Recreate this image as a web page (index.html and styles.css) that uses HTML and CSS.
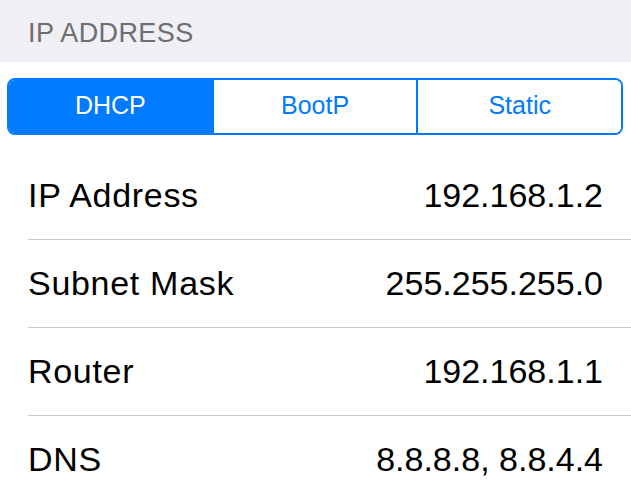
FILE: index.html
```html
<!DOCTYPE html>
<html lang="en">
<head>
    <meta charset="UTF-8">
    <meta name="viewport" content="width=device-width, initial-scale=1.0">
    <title>IP Address</title>
    <link rel="stylesheet" href="styles.css">
</head>
<body>
    <header class="section-header">IP ADDRESS</header>

    <div class="segmented">
        <button class="segment active">DHCP</button>
        <button class="segment">BootP</button>
        <button class="segment">Static</button>
    </div>

    <ul class="table">
        <li class="row"><span class="label">IP Address</span><span class="value">192.168.1.2</span></li>
        <li class="row"><span class="label">Subnet Mask</span><span class="value">255.255.255.0</span></li>
        <li class="row"><span class="label">Router</span><span class="value">192.168.1.1</span></li>
        <li class="row"><span class="label">DNS</span><span class="value">8.8.8.8, 8.8.4.4</span></li>
    </ul>
</body>
</html>
```

FILE: styles.css
```css
body {
    font-family: "Liberation Sans", Arial, sans-serif;
    margin: 0;
    padding: 0;
    background-color: #ffffff;
    color: #000;
    overflow: hidden;
}
.section-header {
    background-color: #efeff4;
    color: #6d6d72;
    height: 62px;
    padding: 5px 0 0 28px;
    box-sizing: border-box;
    display: flex;
    align-items: center;
    font-size: 27px;
    letter-spacing: 0.4px;
}
.segmented {
    display: flex;
    margin: 16px 8px 0 7px;
    height: 57px;
    border: 2px solid #007aff;
    border-radius: 8px;
    overflow: hidden;
    box-sizing: border-box;
}
.segment {
    flex: 1;
    margin: 0;
    padding: 0 0 3px 0;
    border: none;
    border-left: 2px solid #007aff;
    background: #fff;
    color: #007aff;
    font-family: inherit;
    font-size: 25px;
    cursor: pointer;
}
.segment:first-child {
    border-left: none;
}
.segment.active {
    background-color: #007aff;
    color: #fff;
}
.table {
    list-style: none;
    margin: 17px 0 0 0;
    padding: 0 0 0 28px;
}
.row {
    display: flex;
    justify-content: space-between;
    align-items: center;
    height: 87px;
    padding-right: 28px;
    border-bottom: 1px solid #c8c7cc;
    font-size: 34px;
}
.row:last-child {
    border-bottom: none;
}
.label {
    letter-spacing: 0.7px;
}
```
